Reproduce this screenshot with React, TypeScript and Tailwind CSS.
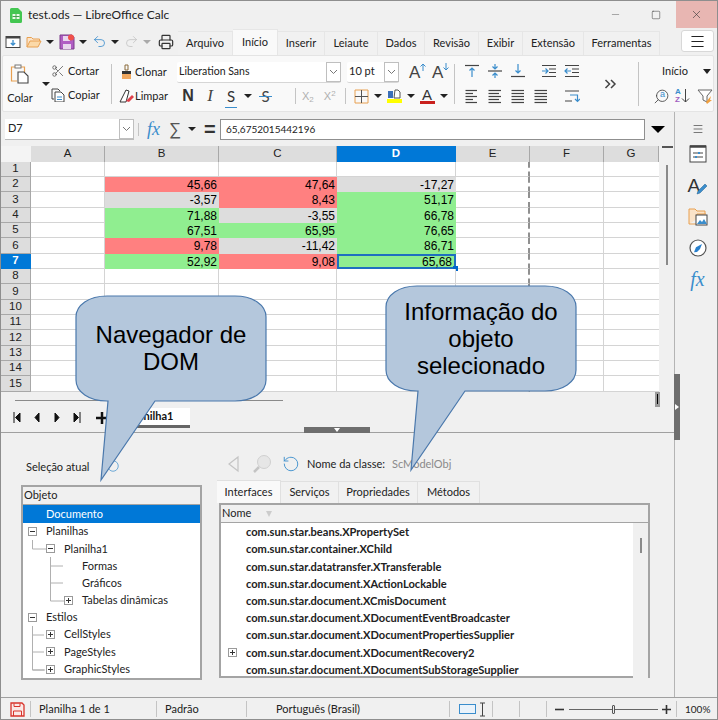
import { Scissors, Printer, Undo2, Redo2, Menu, Minus, Square, X, Search, RotateCw } from 'lucide-react';
import type { ReactNode } from 'react';

const uiFont = "font-['Lato',sans-serif]";
const cellFont = "font-['Liberation_Sans',Arial,sans-serif]";

const tabs = [
  { label: 'Arquivo', w: 'w-[55px]' },
  { label: 'Início', w: 'w-[45px]', active: true },
  { label: 'Inserir', w: 'w-[47px]' },
  { label: 'Leiaute', w: 'w-[53px]' },
  { label: 'Dados', w: 'w-[47px]' },
  { label: 'Revisão', w: 'w-[54px]' },
  { label: 'Exibir', w: 'w-[44px]' },
  { label: 'Extensão', w: 'w-[61px]' },
  { label: 'Ferramentas', w: 'w-[76px]' },
];

const colClass = 'grid grid-cols-[30px_74px_114px_118px_119px_74px_74px_55px] grid-rows-[100%] leading-none';

const R = 'bg-[#ff8080]';
const G = 'bg-[#dddddd]';
const V = 'bg-[#90ee90]';

const sheet: Record<number, [string, string][]> = {
  2: [['45,66', R], ['47,64', R], ['-17,27', G]],
  3: [['-3,57', G], ['8,43', R], ['51,17', V]],
  4: [['71,88', V], ['-3,55', G], ['66,78', V]],
  5: [['67,51', V], ['65,95', V], ['76,65', V]],
  6: [['9,78', R], ['-11,42', G], ['86,71', V]],
  7: [['52,92', V], ['9,08', R], ['65,68', V]],
};

const tree = [
  { text: 'Documento', pad: 'pl-[5px]', box: '', selected: true },
  { text: 'Planilhas', pad: 'pl-[5px]', box: 'minus' },
  { text: 'Planilha1', pad: 'pl-[23px]', box: 'minus' },
  { text: 'Formas', pad: 'pl-[41px]', box: '' },
  { text: 'Gráficos', pad: 'pl-[41px]', box: '' },
  { text: 'Tabelas dinâmicas', pad: 'pl-[41px]', box: 'plus' },
  { text: 'Estilos', pad: 'pl-[5px]', box: 'minus' },
  { text: 'CellStyles', pad: 'pl-[23px]', box: 'plus' },
  { text: 'PageStyles', pad: 'pl-[23px]', box: 'plus' },
  { text: 'GraphicStyles', pad: 'pl-[23px]', box: 'plus' },
];

const interfaces = [
  'com.sun.star.beans.XPropertySet',
  'com.sun.star.container.XChild',
  'com.sun.star.datatransfer.XTransferable',
  'com.sun.star.document.XActionLockable',
  'com.sun.star.document.XCmisDocument',
  'com.sun.star.document.XDocumentEventBroadcaster',
  'com.sun.star.document.XDocumentPropertiesSupplier',
  'com.sun.star.document.XDocumentRecovery2',
  'com.sun.star.document.XDocumentSubStorageSupplier',
];

function Arrow({ className = '' }: { className?: string }) {
  return <span className={`inline-block h-0 w-0 border-x-[4px] border-t-[4px] border-x-transparent border-t-[#222] ${className}`} />;
}

function Icon({ w = 16, h = 16, vb, children, className = '' }: { w?: number; h?: number; vb?: string; children: ReactNode; className?: string }) {
  return (
    <svg width={w} height={h} viewBox={vb ?? `0 0 ${w} ${h}`} fill="none" className={`shrink-0 ${className}`}>
      {children}
    </svg>
  );
}

function Sep({ className = '' }: { className?: string }) {
  return <div className={`w-px bg-[#c4c4c4] ${className}`} />;
}

function Chevron() {
  return (
    <Icon w={9} h={6}>
      <path d="M1 1l3.5 3.5L8 1" stroke="#777" />
    </Icon>
  );
}

function Lines({ rows }: { rows: number[] }) {
  return (
    <Icon>
      {rows.map((x, i) => (
        <path key={i} d={`M1.5 ${2.5 + i * 3}H${x}`} stroke="#444" strokeWidth="1.2" />
      ))}
    </Icon>
  );
}

function VAlign({ mode }: { mode: string }) {
  return (
    <Icon>
      {mode === 'top' && <path d="M8 14V5M5.5 7.5L8 5l2.5 2.5" stroke="#3a8dcc" strokeWidth="1.2" />}
      {mode === 'top' && <path d="M1 2.5h14" stroke="#444" strokeWidth="1.2" />}
      {mode === 'mid' && <path d="M8 1v5M5.5 3.5L8 6l2.5-2.5M8 15v-5M5.5 12.5L8 10l2.5 2.5" stroke="#3a8dcc" strokeWidth="1.2" />}
      {mode === 'mid' && <path d="M1 8h14" stroke="#444" strokeWidth="1.2" />}
      {mode === 'bot' && <path d="M8 1v9M5.5 7.5L8 10l2.5-2.5" stroke="#3a8dcc" strokeWidth="1.2" />}
      {mode === 'bot' && <path d="M1 13.5h14" stroke="#444" strokeWidth="1.2" />}
    </Icon>
  );
}

function Indent({ flip }: { flip?: boolean }) {
  return (
    <Icon>
      <path d="M1 2.5h14M8 6h7M8 9.5h7M1 13.5h14" stroke="#444" strokeWidth="1.2" />
      {flip ? <path d="M7 8H1M3.5 5.5L1 8l2.5 2.5" stroke="#3a8dcc" strokeWidth="1.2" /> : <path d="M1 8h6M4.5 5.5L7 8l-2.5 2.5" stroke="#3a8dcc" strokeWidth="1.2" />}
    </Icon>
  );
}

function FontSize({ up }: { up?: boolean }) {
  return (
    <div className={`relative h-[18px] w-[16px] ${cellFont} text-[17px] leading-[20px] text-[#444]`}>
      A
      <svg width="8" height="8" viewBox="0 0 8 8" fill="none" className="absolute right-[-2px] top-0">
        {up ? <path d="M4 8V1M1.5 3.5L4 1l2.5 2.5" stroke="#3a8dcc" /> : <path d="M4 0v7M1.5 4.5L4 7l2.5-2.5" stroke="#3a8dcc" />}
      </svg>
    </div>
  );
}

function TitleBar() {
  return (
    <div className="flex h-[27px] items-center bg-[#f0f0f0]">
      <Icon w={14} h={16} className="ml-[8px]">
        <path d="M1 2.5A1.5 1.5 0 012.5 1H9l4 4v9.5a1.5 1.5 0 01-1.5 1.5h-9A1.5 1.5 0 011 14.500z" fill="#43c651" />
        <rect x="3.500" y="7" width="7" height="5" fill="#eafbe9" />
        <path d="M3.500 9.500h7M7 7v5" stroke="#43a34c" />
      </Icon>
      <span className="ml-[5px] text-[12px] text-[#222]">test.ods — LibreOffice Calc</span>
      <div className="ml-auto flex h-full items-center">
        <div className="flex w-[40px] justify-center text-[#8a8a8a]"><Minus size={11} strokeWidth={1.6} /></div>
        <div className="flex w-[41px] justify-center text-[#333]"><Square size={10} strokeWidth={1.2} /></div>
        <div className="flex h-full w-[41px] items-center justify-center bg-[#e8b6b2] text-[#333]"><X size={13} strokeWidth={1.1} /></div>
      </div>
    </div>
  );
}

function QuickBar() {
  return (
    <div className="flex h-[27px] items-end bg-[#f0f0f0]">
      <div className="flex h-full w-[177px] items-center pl-[4px]">
        <Icon>
          <rect x="1" y="2.500" width="14" height="11" fill="#fff" stroke="#444" />
          <path d="M1 2.500h14v2H1z" fill="#444" />
          <path d="M8 6v5M5.800 9L8 11l2.200-2" stroke="#3a8dcc" strokeWidth="1.3" />
        </Icon>
        <Icon className="ml-[5px]">
          <path d="M1 13V3.500h4.500L7 5h6.500v2" fill="#fbe3c8" stroke="#e8a050" />
          <path d="M1 13l3-6h11l-3 6z" fill="#fbd9a8" stroke="#e8a050" />
        </Icon>
        <Arrow className="ml-[4px]" />
        <Icon className="ml-[5px]">
          <path d="M1 1h12l2 2v12H1z" fill="#b05dc4" stroke="#7a3d8a" />
          <rect x="4" y="2" width="7" height="5" fill="#e9d6ee" />
          <rect x="4" y="10" width="8" height="5" fill="#e9d6ee" />
          <circle cx="12" cy="3.500" r="3" fill="#f0504a" />
        </Icon>
        <Arrow className="ml-[4px]" />
        <Undo2 size={15} strokeWidth={1.3} className="ml-[5px] text-[#3a8dcc]" />
        <Arrow className="ml-[4px]" />
        <Redo2 size={15} strokeWidth={1.3} className="ml-[5px] text-[#c4c4c4]" />
        <Arrow className="ml-[4px] border-t-[#aaa]" />
        <Printer size={16} strokeWidth={1.8} className="ml-[7px] text-[#333]" />
      </div>
      {tabs.map((t) => (
        <div
          key={t.label}
          className={`flex items-center justify-center border-r border-t border-[#e6e6e6] text-[11px] text-[#222] ${t.w} ${t.active ? 'h-[26px] bg-[#f9f9f9]' : 'h-[24px] bg-[#f1f1f1]'}`}
        >
          {t.label}
        </div>
      ))}
      <div className="mb-[3px] ml-[21px] flex h-[22px] w-[33px] items-center justify-center rounded-[3px] border border-[#d8d8d8] bg-white text-[#222]">
        <Menu size={17} strokeWidth={1.5} />
      </div>
    </div>
  );
}

function Ribbon() {
  return (
    <div className="mx-[1px] mr-[3px] flex h-[57px] items-center rounded-[2px] border border-[#e4e4e4] bg-[#f9f9f9] text-[11px] text-[#222]">
      {/* clipboard */}
      <div className="flex h-full w-[108px] shrink-0">
        <div className="flex w-[38px] flex-col items-center pr-[4px] pt-[8px]">
          <Icon w={20} h={20}>
            <path d="M5 3H1.500v14H7" stroke="#e8a050" strokeWidth="1.2" />
            <path d="M11 3h3.500v5" stroke="#e8a050" strokeWidth="1.2" />
            <rect x="5" y="1" width="6" height="3" fill="#fff" stroke="#777" />
            <path d="M8 8h6l4 4v7H8z" fill="#fff" stroke="#444" strokeWidth="1.1" />
          </Icon>
          <span className="mt-[6px]">Colar</span>
        </div>
        <div className="flex w-[10px] items-center justify-center pt-[1px]"><Arrow /></div>
        <div className="flex flex-col gap-[6px] pt-[6px]">
          <div className="flex h-[18px] items-center gap-[3px]">
            <Scissors size={14} strokeWidth={1.2} className="text-[#444]" />
            <span>Cortar</span>
          </div>
          <div className="flex h-[18px] items-center gap-[3px]">
            <Icon w={14} h={14}>
              <path d="M3 11H1V1h6l2 2" stroke="#444" />
              <path d="M4 4h6l3 3v7H4z" fill="#fff" stroke="#444" />
              <path d="M6 9h5M6 11.500h5" stroke="#3a8dcc" />
            </Icon>
            <span>Copiar</span>
          </div>
        </div>
      </div>
      <Sep className="h-[40px]" />
      {/* character */}
      <div className="flex w-[342px] shrink-0 flex-col gap-[3px] pl-[7px] pt-[1px]">
        <div className="flex h-[21px] items-center">
          <div className="flex w-[58px] items-center">
            <Icon>
              <path d="M6 1h3v5H6z" stroke="#8a6a3a" />
              <path d="M3 7h9v3H3z" fill="#333" />
              <path d="M3 10h9v5H3z" fill="#f0a860" />
            </Icon>
            <span>Clonar</span>
          </div>
          <div className="flex h-[21px] w-[164px] items-center rounded-[2px] border-b border-[#d6d6d6] bg-white pl-[2px]">
            <span className="text-[10.5px]">Liberation Sans</span>
            <div className="ml-auto flex h-full w-[15px] items-center justify-center border border-[#bfbfbf] bg-white"><Chevron /></div>
          </div>
          <div className="ml-[6px] flex h-[21px] w-[52px] items-center rounded-[2px] border-b border-[#d6d6d6] bg-white pl-[2px]">
            <span className="text-[11px]">10 pt</span>
            <div className="ml-auto flex h-full w-[15px] items-center justify-center border border-[#bfbfbf] bg-white"><Chevron /></div>
          </div>
          <div className="ml-[10px]"><FontSize up /></div>
          <div className="ml-[7px]"><FontSize /></div>
        </div>
        <div className="flex h-[21px] items-center">
          <div className="flex w-[63px] items-center">
            <Icon>
              <path d="M1 14L7 2l3 1-3 11z" fill="#fff" stroke="#333" />
              <path d="M7 13l6-6 2 2-5 5z" fill="#e0404a" />
            </Icon>
            <span>Limpar</span>
          </div>
          <span className={`w-[12px] text-center ${cellFont} text-[16px] font-bold text-[#333]`}>N</span>
          <span className={`ml-[10px] w-[12px] text-center font-['Liberation_Serif',serif] text-[17px] italic text-[#444]`}>I</span>
          <span className="relative ml-[9px] w-[12px] text-center text-[15px] text-[#333]">
            S
            <span className="absolute bottom-[-1px] left-0 h-[1px] w-full bg-[#3a8dcc]" />
          </span>
          <Arrow className="ml-[7px]" />
          <span className="relative ml-[7px] w-[13px] text-center text-[15px] text-[#444]">
            S
            <span className="absolute left-0 top-[11px] h-[1px] w-full bg-[#3a8dcc]" />
          </span>
          <Sep className="ml-[23px] h-[16px]" />
          <span className={`ml-[6px] text-[11px] text-[#b0b0b0] ${cellFont}`}>X<sub className="text-[8px]">2</sub></span>
          <span className={`ml-[10px] text-[11px] text-[#b0b0b0] ${cellFont}`}>X<sup className="text-[8px]">2</sup></span>
          <Sep className="ml-[9px] h-[16px]" />
          <Icon w={15} h={15} className="ml-[8px]">
            <path d="M1 1h13v13H1z" stroke="#e8a050" />
            <path d="M7.500 1v13M1 7.500h13" stroke="#555" />
          </Icon>
          <Arrow className="ml-[5px]" />
          <div className="ml-[5px] flex w-[15px] flex-col">
            <Icon w={15} h={10}>
              <path d="M1 2h5v7H1z" fill="#3a6fb8" />
              <path d="M8 1h3l2 2v6H7z" fill="#fff" stroke="#555" />
            </Icon>
            <span className="h-[4px] bg-[#ffff00]" />
          </div>
          <Arrow className="ml-[5px]" />
          <div className={`ml-[5px] flex w-[15px] flex-col items-center ${cellFont}`}>
            <span className="h-[13px] text-[15px] leading-[14px] text-[#333]">A</span>
            <span className="h-[3px] w-full bg-[#c9211e]" />
          </div>
          <Arrow className="ml-[5px]" />
        </div>
      </div>
      <Sep className="h-[40px]" />
      {/* paragraph */}
      <div className="flex w-[125px] shrink-0 flex-col gap-[9px] pl-[9px]">
        <div className="flex h-[16px] items-center">
          <VAlign mode="top" />
          <div className="ml-[7px]"><VAlign mode="mid" /></div>
          <div className="ml-[7px]"><VAlign mode="bot" /></div>
          <Sep className="ml-[7px] h-[16px]" />
          <div className="ml-[8px]"><Indent /></div>
          <div className="ml-[7px]"><Indent flip /></div>
        </div>
        <div className="flex h-[16px] items-center">
          <Lines rows={[13, 9, 13, 9, 13]} />
          <div className="ml-[7px]"><Lines rows={[14, 12, 14, 12, 14]} /></div>
          <div className="ml-[7px]"><Lines rows={[14, 14, 14, 14, 14]} /></div>
          <div className="ml-[7px]"><Lines rows={[14, 14, 14, 14, 14]} /></div>
          <Sep className="ml-[7px] h-[16px]" />
          <div className="ml-[8px]">
            <Icon>
              <path d="M1 3h14M1 13h7" stroke="#444" strokeWidth="1.2" />
              <path d="M6 7h7.500v6M11 11l2.500 2.500L16 11" stroke="#3a8dcc" strokeWidth="1.2" />
            </Icon>
          </div>
        </div>
      </div>
      <div className="flex w-[58px] shrink-0 justify-center pl-[3px]">
        <Icon w={13} h={10}>
          <path d="M1.500 1l4 4-4 4M7 1l4 4-4 4" stroke="#444" strokeWidth="1.5" />
        </Icon>
      </div>
      <Sep className="h-[44px]" />
      <div className="flex flex-1 flex-col gap-[7px] pl-[14px]">
        <div className="flex h-[18px] items-center">
          <span className="ml-[9px]">Início</span>
          <Arrow className="ml-[15px] border-x-[4px] border-t-[5px]" />
        </div>
        <div className="flex h-[18px] items-center">
          <div className="relative">
            <Search size={17} strokeWidth={1.2} className="-scale-x-100 text-[#444]" />
            <span className={`absolute left-[7px] top-[1px] text-[9px] leading-[10px] text-[#3a8dcc] ${cellFont}`}>a</span>
          </div>
          <div className="ml-[5px] flex w-[17px] items-center">
            <span className={`flex flex-col ${cellFont} text-[8px] font-bold leading-[8px]`}>
              <span className="text-[#3a8dcc]">A</span>
              <span className="text-[#a060c0]">Z</span>
            </span>
            <Icon w={9} h={16}>
              <path d="M4.500 1v13M1 10.500L4.500 14 8 10.500" stroke="#444" />
            </Icon>
          </div>
          <Icon w={16} h={16} className="ml-[5px]">
            <path d="M1 2h14L10 8v6L6 12V8z" fill="#fff" stroke="#666" />
            <path d="M9 14l5-6-1 4h2l-5 4z" fill="#f0a040" />
          </Icon>
        </div>
      </div>
    </div>
  );
}

function FormulaBar() {
  return (
    <div className="flex h-[34px] items-center pl-[4px] text-[11px] text-[#222]">
      <div className="flex h-[21px] w-[129px] items-center border-b border-[#bbb] bg-white pl-[3px]">
        <span>D7</span>
        <div className="ml-auto flex h-full w-[15px] items-center justify-center border border-[#bfbfbf]"><Chevron /></div>
      </div>
      <Sep className="ml-[4px] h-[13px]" />
      <span className="ml-[8px] w-[15px] font-['Liberation_Serif',serif] text-[18px] italic leading-none text-[#3a8dcc]">fx</span>
      <span className={`ml-[7px] w-[12px] text-[17px] leading-none text-[#555] ${cellFont}`}>∑</span>
      <Arrow className="ml-[7px]" />
      <span className={`ml-[8px] w-[10px] text-center text-[20px] font-bold leading-none text-[#333] ${cellFont}`}>=</span>
      <div className="ml-[6px] flex h-[21px] w-[425px] items-center border border-[#8f8f8f] bg-white pl-[5px] text-[10px]">65,6752015442196</div>
      <Arrow className="ml-[6px] border-x-[7px] border-t-[7px] !border-t-black" />
    </div>
  );
}

function Grid() {
  const heads = ['A', 'B', 'C', 'D', 'E', 'F', 'G'];
  return (
    <div className={`flex ${cellFont} text-[12px] text-black`}>
      <div className="w-[658px]">
        <div className={`${colClass} h-[16px] text-[11.5px]`}>
          <div className="bg-[#f4f4f4]" />
          {heads.map((h) => (
            <div
              key={h}
              className={`flex items-center justify-center border-r ${h === 'D' ? 'border-[#0078d7] bg-[#0078d7] font-bold text-white' : 'border-[#a8a8a8] bg-[#dddddd] text-[#222]'}`}
            >
              {h}
            </div>
          ))}
        </div>
        {Array.from({ length: 15 }, (_, i) => i + 1).map((n) => {
          const vals = sheet[n];
          return (
            <div key={n} className={`${colClass} ${n % 3 === 0 ? 'h-[16px]' : 'h-[15px]'}`}>
              <div className={`flex items-center justify-center border-b border-r text-[11.5px] ${n === 7 ? 'border-[#0078d7] bg-[#0078d7] font-bold text-white' : 'border-[#a8a8a8] bg-[#dddddd] text-[#222]'}`}>
                {n}
              </div>
              <div className="border-b border-r border-[#d4d4d4] bg-white" />
              {[0, 1, 2].map((c) => {
                const v = vals?.[c];
                const active = n === 7 && c === 2;
                return (
                  <div
                    key={c}
                    className={`relative flex items-center justify-end pr-[2px] ${v ? v[1] : 'border-b border-r border-[#d4d4d4] bg-white'} ${active ? 'border-2 border-[#1f6fc0] pr-0' : ''}`}
                  >
                    {v?.[0]}
                    {active && <span className="absolute bottom-[-4px] right-[-4px] h-[5px] w-[5px] bg-[#0066cc]" />}
                  </div>
                );
              })}
              <div className="border-b border-r-2 border-b-[#d4d4d4] border-r-[#909090] border-dashed [border-bottom-style:solid] bg-white" />
              <div className="border-b border-r border-[#d4d4d4] bg-white" />
              <div className="border-b border-[#d4d4d4] bg-white" />
            </div>
          );
        })}
      </div>
      <div className="relative w-[15px] bg-[#f0f0f0]">
        <div className="h-[2px] w-[11px] translate-x-[3px] bg-[#555]" />
        <div className="ml-[7px] mt-[17px] h-[100px] w-[2px] bg-[#8a8a8a]" />
      </div>
    </div>
  );
}

function SheetTabs() {
  return (
    <div className="relative flex h-[41px] flex-col border-b border-[#a0a0a0] bg-[#f0f0f0]">
      <div className="flex h-[16px] items-center pl-[14px] pr-[14px]">
        <div className="mt-[1px] h-[1.5px] w-[268px] bg-[#8a8a8a]" />
        <div className="ml-auto flex h-[15px] w-[5px] -translate-y-[1px] items-center justify-center bg-[#9a9a9a]">
          <span className="h-[10px] w-px bg-black" />
        </div>
      </div>
      <div className="flex flex-1 items-start pl-[12px]">
        <Icon w={8} h={11} className="mt-[4px]"><path d="M1 0v11M7 1v9L2.500 5.500z" stroke="#111" fill="#111" /></Icon>
        <Icon w={6} h={11} className="ml-[13px] mt-[4px]"><path d="M5 1v9L1 5.500z" fill="#111" stroke="#111" /></Icon>
        <Icon w={6} h={11} className="ml-[14px] mt-[4px]"><path d="M1 1v9l4-4.500z" fill="#111" stroke="#111" /></Icon>
        <Icon w={8} h={11} className="ml-[13px] mt-[4px]"><path d="M7 0v11M1 1v9l4.500-4.500z" stroke="#111" fill="#111" /></Icon>
        <Icon w={12} h={12} className="ml-[15px] mt-[4px]"><path d="M6 0v12M0 6h12" stroke="#111" strokeWidth="2.500" /></Icon>
        <div className="ml-[4px] flex h-[20px] w-[78px] items-center justify-center border-b-[3px] border-[#666] bg-white text-[11px] font-bold text-[#111]">Planilha1</div>
      </div>
      <div className="absolute bottom-[-1px] left-[303px] flex h-[6px] w-[66px] items-center justify-center bg-[#6e6e6e]">
        <span className="h-0 w-0 border-x-[3px] border-t-[4px] border-x-transparent border-t-white" />
      </div>
    </div>
  );
}

function Box({ kind }: { kind: string }) {
  return (
    <span className="relative flex h-[9px] w-[9px] items-center justify-center border border-[#9a9a9a] bg-white">
      <span className="h-px w-[5px] bg-[#333]" />
      {kind === 'plus' && <span className="absolute h-[5px] w-px bg-[#333]" />}
    </span>
  );
}

function TreePanel() {
  return (
    <div className="h-[195px] w-[181px] border-2 border-[#a4a4a4] bg-white text-[11px] text-[#222]">
      <div className="flex h-[18px] items-center border-b border-[#a4a4a4] bg-[#f0f0f0] pl-[1px]">Objeto</div>
      <div className="relative">
        <svg width="100" height="170" className="absolute left-0 top-0" fill="none" stroke="#b0b0b0">
          <path d="M9.500 35v9H23M27.500 52v44H41M27.500 61H40M27.500 78H40M9.500 121v44H22M9.500 130H21M9.500 147H21M9.500 165H21" />
        </svg>
        {tree.map((t) => (
          <div key={t.text} className={`relative flex items-center ${t.selected ? 'h-[18px] bg-[#0078d7] text-white' : 'h-[17.2px]'} ${t.pad}`}>
            <span className="mr-[9px] flex w-[9px] justify-center">{t.box && <Box kind={t.box} />}</span>
            {t.text}
          </div>
        ))}
      </div>
    </div>
  );
}

function DetailPanel() {
  const detailTabs = ['Interfaces', 'Serviços', 'Propriedades', 'Métodos'];
  const widths = ['w-[64px]', 'w-[58px]', 'w-[79px]', 'w-[62px]'];
  return (
    <div className="w-[433px] text-[11px] text-[#222]">
      <div className="flex h-[23px] items-center pl-[10px]">
        <Icon w={13} h={18}><path d="M11 2L2 9l9 7z" stroke="#c4c4c4" strokeWidth="1.200" /></Icon>
        <Icon w={20} h={20} className="ml-[12px]">
          <circle cx="12" cy="8" r="6.500" fill="#e6e6e6" stroke="#d0d0d0" />
          <path d="M7 13l-5 5" stroke="#c4c4c4" strokeWidth="2.500" />
        </Icon>
        <RotateCw size={18} strokeWidth={1.2} className="ml-[10px] -scale-x-100 text-[#3a8dcc]" />
        <span className="ml-[7px] pt-[1px]">Nome da classe:</span>
        <span className="ml-[7px] pt-[1px] text-[#8a8a8a]">ScModelObj</span>
      </div>
      <div className="mt-[5px] flex h-[23px]">
        {detailTabs.map((t, i) => (
          <div key={t} className={`flex items-center justify-center border-r border-t border-[#e0e0e0] ${widths[i]} ${i === 0 ? 'bg-[#f9f9f9]' : 'mt-[1px] bg-[#f1f1f1]'}`}>{t}</div>
        ))}
      </div>
      <div className="ml-[2px] h-[175px] w-[431px] border-2 border-[#a4a4a4] bg-white">
        <div className="flex h-[18px] items-center gap-[15px] border-b border-[#a4a4a4] bg-[#f0f0f0] pl-[1px]">
          Nome
          <span className="h-0 w-0 border-x-[3px] border-t-[6px] border-x-transparent border-t-[#ccc]" />
        </div>
        <div className="flex">
          <div className="w-[412px] pt-[1px]">
            {interfaces.map((name, i) => (
              <div key={name} className="flex h-[17.2px] items-center pl-[7px] text-[11.1px] font-bold">
                <span className="mr-[9px] flex w-[9px] justify-center">{i === 7 && <Box kind="plus" />}</span>
                {name}
              </div>
            ))}
          </div>
          <div className="flex-1 bg-[#f0f0f0] pl-[7px] pt-[15px]">
            <div className="h-[15px] w-[2px] bg-[#8a8a8a]" />
          </div>
        </div>
      </div>
    </div>
  );
}

function Callout({ className, children }: { className: string; children: ReactNode }) {
  return (
    <div className={`absolute h-[192px] w-[192px] ${className}`}>
      <svg width="192" height="192" fill="none" className="absolute left-0 top-0">
        <path d="M32 1H160C178 1 191 10 191 22V85C191 97 178 106 160 106H80L26 185 33 106H32C14 106 1 97 1 85V22C1 10 14 1 32 1Z" fill="#b4c7dc" stroke="#4a78ac" strokeWidth="1.200" />
      </svg>
      <div className={`absolute left-0 top-0 flex h-[106px] w-[192px] flex-col items-center justify-center text-center ${cellFont} text-[24px] leading-[27px] text-black`}>
        {children}
      </div>
    </div>
  );
}

function StatusBar() {
  return (
    <div className="flex h-[22px] items-center border-t border-[#a0a0a0] bg-[#f0f0f0] pt-[1px] text-[11px] text-[#222]">
      <Icon w={15} h={15} className="ml-[9px]">
        <path d="M1 1h11l2 2v11H1z" stroke="#d8342c" strokeWidth="1.300" fill="#fbe9e7" />
        <path d="M4 1.500v3h6v-3M3.500 14V9h8v5" stroke="#d8342c" />
      </Icon>
      <Sep className="ml-[5px] h-[16px]" />
      <span className="ml-[8px] w-[117px]">Planilha 1 de 1</span>
      <Sep className="h-[16px]" />
      <span className="ml-[8px] w-[81px]">Padrão</span>
      <Sep className="h-[16px]" />
      <span className="w-[202px] pr-[60px] text-center">Português (Brasil)</span>
      <Sep className="h-[16px]" />
      <Icon w={17} h={10} className="ml-[9px]"><rect x="0.500" y="0.500" width="16" height="9" fill="#eaf3fb" stroke="#3a8dcc" /></Icon>
      <Icon w={7} h={15} className="ml-[3px]"><path d="M1 1h5M1 14h5M3.500 1v13" stroke="#444" /></Icon>
      <Sep className="ml-[6px] h-[16px]" />
      <Sep className="ml-[26px] h-[16px]" />
      <Sep className="ml-[26px] h-[16px]" />
      <Icon w={9} h={9} className="ml-[8px]"><path d="M0 4.500h9" stroke="#333" strokeWidth="1.600" /></Icon>
      <div className="relative ml-[5px] h-px w-[89px] bg-[#666]">
        <span className="absolute left-[43px] top-[-4px] h-[9px] w-[3px] rounded-[1px] border border-[#555] bg-[#eee]" />
      </div>
      <Icon w={9} h={9} className="ml-[4px]"><path d="M0 4.500h9M4.500 0v9" stroke="#333" strokeWidth="1.600" /></Icon>
      <Sep className="ml-[5px] h-[16px]" />
      <span className="ml-[8px] text-[10px]">100%</span>
    </div>
  );
}

function Sidebar() {
  return (
    <div className="flex w-[44px] flex-col items-center border-l border-[#b4b4b4] bg-[#f0f0f0] pl-[3px]">
      <div className="flex h-[33px] items-center text-[#444]"><Menu size={12} strokeWidth={1.4} /></div>
      <div className="flex flex-col items-center gap-[12px]">
        <Icon w={18} h={18}>
          <rect x="1" y="1" width="16" height="16" fill="#fff" stroke="#444" />
          <path d="M1 1.500h16" stroke="#444" strokeWidth="2.500" />
          <path d="M4 8h10M4 12h10" stroke="#444" />
          <path d="M10 7v2M7 11v2" stroke="#3a8dcc" strokeWidth="2" />
        </Icon>
        <div className="relative h-[20px] w-[20px]">
          <span className={`absolute left-0 top-[-3px] ${cellFont} text-[19px] text-[#333]`}>A</span>
          <svg width="12" height="12" viewBox="0 0 12 12" className="absolute bottom-0 right-0" fill="none">
            <path d="M1 11l3-1 7-7-2-2-7 7z" fill="#3a8dcc" stroke="#1f5f90" strokeWidth="0.500" />
          </svg>
        </div>
        <Icon w={20} h={20}>
          <path d="M1 17V2h6l2 2h8v3" fill="#fbe3c8" stroke="#e8a050" />
          <path d="M1 17h8V7h9" stroke="#e8a050" />
          <rect x="8" y="8" width="11" height="10" fill="#fff" stroke="#444" />
          <path d="M9 17l3-4 2 2 2-3 3 5z" fill="#3a8dcc" />
        </Icon>
        <Icon w={18} h={18}>
          <circle cx="9" cy="9" r="8" fill="#fff" stroke="#555" strokeWidth="1.200" />
          <path d="M13 5l-2 5-3 3-3 .200 2-5z" fill="#2a80cc" />
        </Icon>
        <span className="font-['Liberation_Serif',serif] text-[20px] italic leading-none text-[#3a8dcc]">fx</span>
      </div>
    </div>
  );
}

export default function App() {
  return (
    <div className={`relative flex h-[720px] w-[718px] flex-col overflow-hidden border border-[#8e8e8e] bg-[#f0f0f0] ${uiFont}`}>
      <TitleBar />
      <QuickBar />
      <Ribbon />
      <div className="flex flex-1">
        <div className="flex w-[673px] flex-col">
          <FormulaBar />
          <Grid />
          <SheetTabs />
          <div className="flex flex-1 pl-[20px]">
            <div className="pt-[52px]">
              <div className="absolute left-[25px] top-[458px] text-[11px] text-[#222]">Seleção atual</div>
              <TreePanel />
            </div>
            <div className="ml-[15px] pt-[19px]">
              <DetailPanel />
            </div>
          </div>
        </div>
        <Sidebar />
      </div>
      <StatusBar />

      <div className="absolute left-[673px] top-[373px] flex h-[66px] w-[6px] items-center justify-center bg-[#6e6e6e]">
        <span className="h-0 w-0 border-y-[3px] border-l-[4px] border-y-transparent border-l-white" />
      </div>
      <RotateCw size={14} strokeWidth={1.2} className="absolute left-[105px] top-[458px] -scale-x-100 text-[#3a8dcc]" />
      <Callout className="left-[74px] top-[294px]">
        <span>Navegador de</span>
        <span>DOM</span>
      </Callout>
      <Callout className="left-[384px] top-[284px]">
        <span>Informação do</span>
        <span>objeto</span>
        <span>selecionado</span>
      </Callout>
    </div>
  );
}
